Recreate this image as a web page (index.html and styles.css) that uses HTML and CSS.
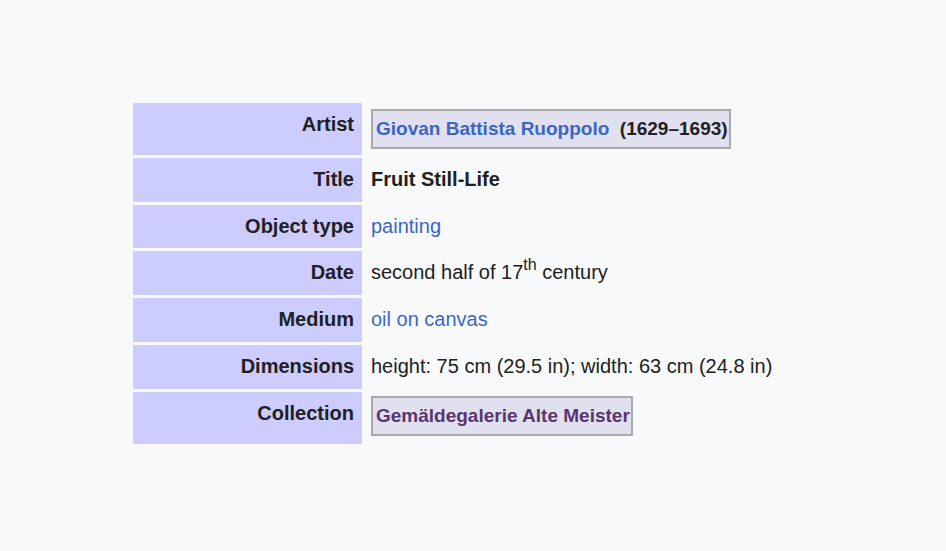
FILE: index.html
```html
<!DOCTYPE html>
<html>
<head>
<meta charset="utf-8">
<link rel="stylesheet" href="styles.css">
</head>
<body>
<div class="page">
<table class="info">
  <tr>
    <th class="label">Artist</th>
    <td class="value"><span class="creator"><a class="link bold" href="#">Giovan Battista Ruoppolo</a>&nbsp; <b>(1629–1693)</b></span></td>
  </tr>
  <tr>
    <th class="label">Title</th>
    <td class="value"><b>Fruit Still-Life</b></td>
  </tr>
  <tr>
    <th class="label">Object type</th>
    <td class="value"><a class="link" href="#">painting</a></td>
  </tr>
  <tr>
    <th class="label">Date</th>
    <td class="value">second half of 17<sup>th</sup> century</td>
  </tr>
  <tr>
    <th class="label">Medium</th>
    <td class="value"><a class="link" href="#">oil on canvas</a></td>
  </tr>
  <tr>
    <th class="label">Dimensions</th>
    <td class="value">height: 75 cm (29.5 in); width: 63 cm (24.8 in)</td>
  </tr>
  <tr>
    <th class="label">Collection</th>
    <td class="value"><span class="creator collection"><a class="visited bold" href="#">Gemäldegalerie Alte Meister</a></span></td>
  </tr>
</table>
</div>
</body>
</html>
```

FILE: styles.css
```css
html, body {
  margin: 0;
  padding: 0;
  background: #f8f9fa;
}
.page {
  padding: 100px 0 0 130px;
  font-family: "Liberation Sans", Arial, sans-serif;
  font-size: 20px;
  color: #202122;
}
.info {
  border-collapse: separate;
  border-spacing: 3px;
}
.label {
  background: #ccccff;
  width: 213px;
  text-align: right;
  vertical-align: top;
  font-weight: bold;
  padding: 9px 8px 9px 8px;
  line-height: 25.8px;
  white-space: nowrap;
}
.value {
  padding: 9px 6px;
  line-height: 25.8px;
  vertical-align: middle;
  white-space: nowrap;
}
.value b { font-weight: bold; }
.link {
  color: #3b66c8;
  text-decoration: none;
}
.visited {
  color: #5a3671;
  text-decoration: none;
}
.bold { font-weight: bold; }
.creator {
  display: inline-block;
  font-size: 19px;
  background: #e0e0ee;
  border: 2px solid #a9a9a9;
  padding: 5px 1px 5px 3px;
  margin: -3px 0;
  line-height: 25.8px;
}
.collection {
  position: relative;
  top: -2px;
  padding-right: 1px;
}
sup {
  font-size: 0.8em;
  line-height: 0;
  vertical-align: 0.55em;
}
```
